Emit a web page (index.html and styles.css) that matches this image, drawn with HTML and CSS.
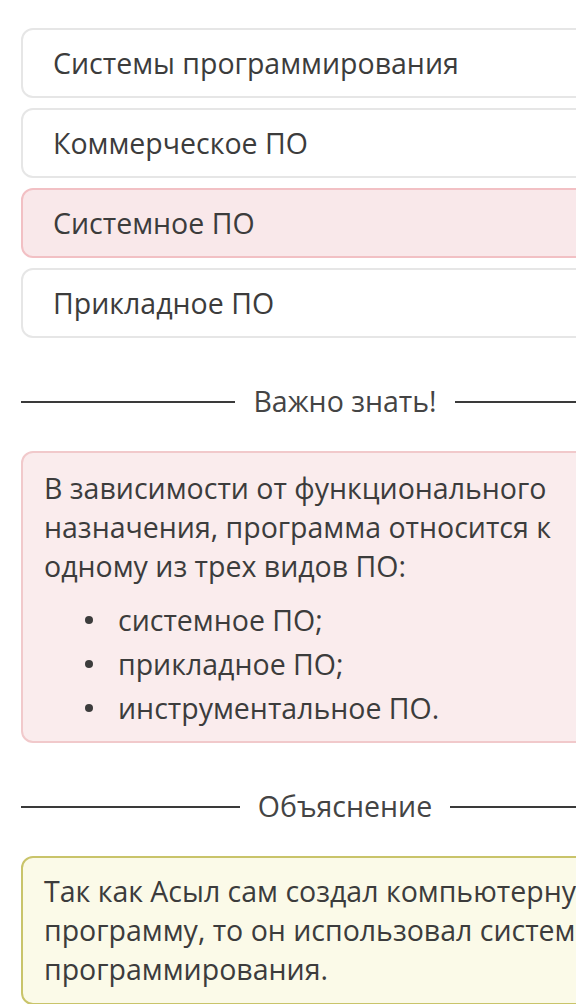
FILE: index.html
```html
<!DOCTYPE html>
<html lang="ru">
<head>
    <meta charset="UTF-8">
    <meta name="viewport" content="width=device-width, initial-scale=1.0">
    <title>Виды программного обеспечения</title>
    <link rel="stylesheet" href="styles.css">
</head>
<body>
    <div id="page-container">
        <div class="answers">
            <div class="answer">Системы программирования</div>
            <div class="answer">Коммерческое ПО</div>
            <div class="answer wrong">Системное ПО</div>
            <div class="answer">Прикладное ПО</div>
        </div>

        <div class="divider"><span>Важно знать!</span></div>

        <div class="note note-important">
            <p>В зависимости от функционального назначения, программа относится к одному из трех видов ПО:</p>
            <ul>
                <li>системное ПО;</li>
                <li>прикладное ПО;</li>
                <li>инструментальное ПО.</li>
            </ul>
        </div>

        <div class="divider"><span>Объяснение</span></div>

        <div class="note note-explain">
            <p>Так как Асыл сам создал компьютерную программу, то он использовал системы программирования.</p>
        </div>
    </div>
</body>
</html>
```

FILE: styles.css
```css
html, body {
    overflow-x: hidden;
}
body {
    font-family: 'Open Sans', 'Noto Sans', sans-serif;
    margin: 0;
    padding: 28px 0 0 21px;
    background-color: #ffffff;
    color: #3c3c3c;
    font-size: 28.5px;
    line-height: 39px;
}
#page-container {
    width: 648px;
}
.answers {
    display: flex;
    flex-direction: column;
    gap: 10px;
}
.answer {
    height: 70px;
    box-sizing: border-box;
    display: flex;
    align-items: center;
    padding-left: 30px;
    border: 2px solid #e6e6e6;
    border-radius: 12px;
    background-color: #ffffff;
}
.answer.wrong {
    background-color: #f9e8ea;
    border-color: #f2c0c4;
}
.divider {
    display: flex;
    align-items: center;
    gap: 18px;
    margin: 44px 0 30px 0;
    color: #444444;
}
.divider::before, .divider::after {
    content: "";
    flex: 1;
    height: 2px;
    background-color: #3a3a3a;
}
.note {
    box-sizing: border-box;
    border: 2px solid #f1c9cb;
    border-radius: 12px;
    padding: 16px 50px 14px 21px;
}
.note p {
    margin: 0;
}
.note-important {
    background-color: #faeced;
    padding-bottom: 11px;
}
.note-important ul {
    list-style: none;
    margin: 12px 0 0 0;
    padding-left: 41px;
}
.note-important li {
    display: flex;
    align-items: center;
    gap: 25px;
    line-height: 44px;
}
.note-important li::before {
    content: "";
    width: 8px;
    height: 8px;
    border-radius: 50%;
    background-color: #3c3c3c;
    flex-shrink: 0;
}
.note-explain {
    background-color: #fbfae8;
    border-color: #c9c46a;
    padding-top: 14px;
}
```
